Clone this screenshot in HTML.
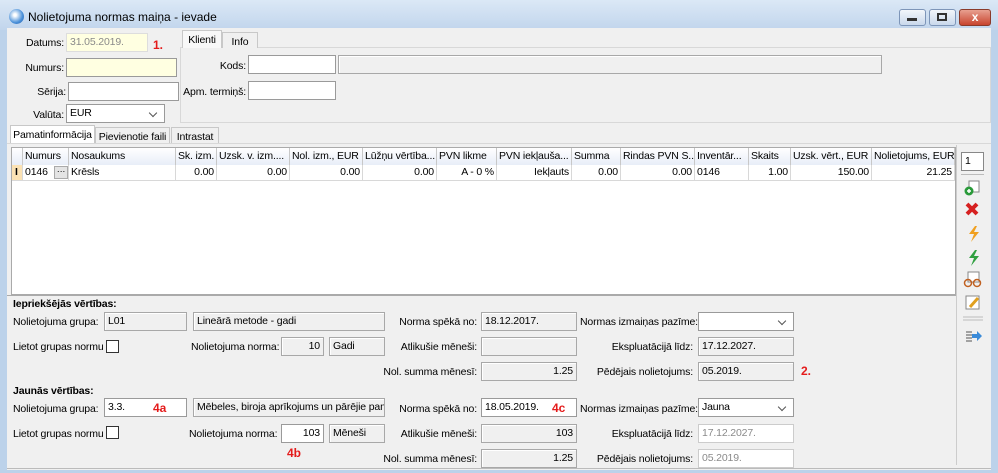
<!DOCTYPE html>
<html><head><meta charset="utf-8"><style>
*{box-sizing:border-box;margin:0;padding:0}
body{width:998px;height:473px;overflow:hidden;font-family:"Liberation Sans",sans-serif;font-size:10.5px;letter-spacing:-0.15px;color:#000;background:#bcd2ea;position:relative}
.a{position:absolute;white-space:nowrap}
.in{position:absolute;background:#fff;border:1px solid #9a9a9a;height:19px;padding:2px 3px;line-height:13px;overflow:hidden;white-space:nowrap}
.ro{background:#f0f0f0;border:1px solid #a8a8a8;box-shadow:inset 1px 1px 0 #fff}
.y{background:#ffffe1}
.r{text-align:right}
.lb{position:absolute;text-align:right;white-space:nowrap;line-height:13px}
.red{position:absolute;color:#e41b1b;font-weight:bold;font-size:12px;letter-spacing:0}
.grey{color:#8a8a8a}
.hd{position:absolute;top:148px;height:17px;border-right:1px solid #c8c8c8;padding:2px 2px;line-height:13px;overflow:hidden;white-space:nowrap;background:linear-gradient(#fff,#e8eef8)}
.cl{position:absolute;top:165px;height:16px;border-right:1px solid #d8d8d8;border-bottom:1px solid #d8d8d8;padding:1px 2px;line-height:13px;overflow:hidden;white-space:nowrap;background:#fff}
.tab{position:absolute;border:1px solid #c8c8c8;border-bottom:none;background:#f0f0f0;padding:3px 0;text-align:center;line-height:13px;white-space:nowrap}
.dd::after{content:"";position:absolute;right:8px;top:5px;width:5px;height:5px;border-right:1px solid #555;border-bottom:1px solid #555;transform:rotate(45deg)}
</style></head><body>
<div class="a" style="left:0;top:0;width:998px;height:30px;background:linear-gradient(#dbe8f6,#c1d5ec)"></div>
<div class="a" style="left:9px;top:9px;width:15px;height:15px;border-radius:50%;background:radial-gradient(circle at 40% 40%,#fff 10%,#4a90d9 60%,#2a5ea8)"></div>
<div class="a" style="left:28px;top:10px;font-size:12px;letter-spacing:0">Nolietojuma normas maiņa - ievade</div>
<div class="a" style="left:899px;top:9px;width:27px;height:17px;border:1px solid #7d95b8;border-radius:3px;background:linear-gradient(#f2f6fb,#c9d8ec)"></div>
<div class="a" style="left:907px;top:18px;width:10px;height:3px;background:#333"></div>
<div class="a" style="left:929px;top:9px;width:27px;height:17px;border:1px solid #7d95b8;border-radius:3px;background:linear-gradient(#f2f6fb,#c9d8ec)"></div>
<div class="a" style="left:937px;top:13px;width:10px;height:8px;border:2px solid #333"></div>
<div class="a" style="left:959px;top:9px;width:32px;height:17px;border:1px solid #8a3a2a;border-radius:3px;background:linear-gradient(#e8a090,#c8442e);color:#fff;font-weight:bold;text-align:center;line-height:15px;font-size:12px">x</div>

<div class="a" style="left:7px;top:28px;width:984px;height:442px;background:#f0f0f0"></div>

<div class="lb" style="left:10px;top:37px;width:54px">Datums:</div>
<div class="in y grey" style="left:66px;top:33px;width:82px;border-color:#ddd">31.05.2019.</div>
<div class="red" style="left:153px;top:38px">1.</div>
<div class="lb" style="left:10px;top:62px;width:54px">Numurs:</div>
<div class="in y" style="left:66px;top:58px;width:111px"></div>
<div class="lb" style="left:10px;top:86px;width:56px">Sērija:</div>
<div class="in" style="left:68px;top:82px;width:111px"></div>
<div class="lb" style="left:10px;top:109px;width:54px">Valūta:</div>
<div class="in dd" style="left:66px;top:104px;width:99px">EUR</div>

<div class="a" style="left:180px;top:47px;width:811px;height:76px;border:1px solid #d8d8d8;background:#f0f0f0"></div>
<div class="tab" style="left:182px;top:30px;width:40px;height:18px;background:#f8f8f8">Klienti</div>
<div class="tab" style="left:222px;top:32px;width:36px;height:16px">Info</div>
<div class="lb" style="left:190px;top:60px;width:56px">Kods:</div>
<div class="in" style="left:248px;top:55px;width:88px"></div>
<div class="in ro" style="left:338px;top:55px;width:544px"></div>
<div class="lb" style="left:180px;top:86px;width:66px">Apm. termiņš:</div>
<div class="in" style="left:248px;top:81px;width:88px"></div>

<div class="tab" style="left:10px;top:125px;width:85px;height:19px;background:#fff">Pamatinformācija</div>
<div class="tab" style="left:95px;top:127px;width:75px;height:17px">Pievienotie faili</div>
<div class="tab" style="left:171px;top:127px;width:48px;height:17px">Intrastat</div>
<div class="a" style="left:7px;top:143px;width:984px;height:1px;background:#d8d8d8"></div>

<div class="a" style="left:11px;top:147px;width:945px;height:148px;background:#fff;border:1px solid #aaa"></div>
<div class="hd" style="left:12px;width:11px"></div>
<div class="hd" style="left:23px;width:46px">Numurs</div>
<div class="hd" style="left:69px;width:107px">Nosaukums</div>
<div class="hd" style="left:176px;width:41px">Sk. izm.</div>
<div class="hd" style="left:217px;width:73px">Uzsk. v. izm....</div>
<div class="hd" style="left:290px;width:73px">Nol. izm., EUR</div>
<div class="hd" style="left:363px;width:74px">Lūžņu vērtība...</div>
<div class="hd" style="left:437px;width:60px">PVN likme</div>
<div class="hd" style="left:497px;width:75px">PVN iekļauša...</div>
<div class="hd" style="left:572px;width:49px">Summa</div>
<div class="hd" style="left:621px;width:74px">Rindas PVN S...</div>
<div class="hd" style="left:695px;width:54px">Inventār...</div>
<div class="hd" style="left:749px;width:42px">Skaits</div>
<div class="hd" style="left:791px;width:81px">Uzsk. vērt., EUR</div>
<div class="hd" style="left:872px;width:83px">Nolietojums, EUR</div>
<div class="cl" style="left:12px;width:11px;background:#fbe2b4;font-weight:bold;padding:1px 3px">I</div>
<div class="cl" style="left:23px;width:46px">0146</div>
<div class="a" style="left:54px;top:166px;width:14px;height:13px;background:#e4e4e4;border:1px solid #aaa;font-size:9px;line-height:8px;text-align:center">···</div>
<div class="cl" style="left:69px;width:107px">Krēsls</div>
<div class="cl r" style="left:176px;width:41px">0.00</div>
<div class="cl r" style="left:217px;width:73px">0.00</div>
<div class="cl r" style="left:290px;width:73px">0.00</div>
<div class="cl r" style="left:363px;width:74px">0.00</div>
<div class="cl r" style="left:437px;width:60px">A - 0 %</div>
<div class="cl r" style="left:497px;width:75px">Iekļauts</div>
<div class="cl r" style="left:572px;width:49px">0.00</div>
<div class="cl r" style="left:621px;width:74px">0.00</div>
<div class="cl" style="left:695px;width:54px">0146</div>
<div class="cl r" style="left:749px;width:42px">1.00</div>
<div class="cl r" style="left:791px;width:81px">150.00</div>
<div class="cl r" style="left:872px;width:83px">21.25</div>

<div class="a" style="left:956px;top:145px;width:1px;height:320px;background:#ccc"></div>
<div class="in" style="left:961px;top:152px;width:23px;height:19px;border-color:#888">1</div>
<div class="a" style="left:961px;top:174px;width:23px;height:1px;background:#bbb"></div>
<svg class="a" style="left:963px;top:180px" width="20" height="180" viewBox="0 0 20 180">
<rect x="6" y="1" width="10" height="11" fill="#fff" stroke="#888"/><circle cx="6" cy="11" r="4.5" fill="#2a9a3a"/><path d="M4 11h4M6 9v4" stroke="#fff" stroke-width="1.5"/>
<path d="M4 24l10 10M14 24l-10 10" stroke="#d62020" stroke-width="4"/>
<path d="M12 46l-6 8h5l-3 8 8-10h-5l3-6z" fill="#f0a020"/>
<path d="M12 70l-6 8h5l-3 8 8-10h-5l3-6z" fill="#30a040"/>
<rect x="5" y="92" width="11" height="10" fill="#fff" stroke="#888"/><circle cx="5" cy="103" r="3.5" fill="none" stroke="#c06020" stroke-width="1.5"/><circle cx="14" cy="103" r="3.5" fill="none" stroke="#c06020" stroke-width="1.5"/>
<rect x="3" y="116" width="13" height="13" fill="#fff" stroke="#888"/><path d="M7 127l8-9" stroke="#e0a020" stroke-width="3"/>
<path d="M0 137h20M0 140h20" stroke="#bbb"/>
<path d="M3 152h6M3 155h6M3 158h6M3 161h6" stroke="#555"/><path d="M9 154h5v-3l5 5-5 5v-3h-5z" fill="#3a8ad8"/>
</svg>

<div class="a" style="left:7px;top:295px;width:949px;height:1px;background:#aaa"></div>
<div class="a" style="left:13px;top:298px;font-weight:bold">Iepriekšējās vērtības:</div>
<div class="lb" style="left:13px;top:316px">Nolietojuma grupa:</div>
<div class="in ro" style="left:104px;top:312px;width:83px">L01</div>
<div class="in ro" style="left:193px;top:312px;width:192px">Lineārā metode - gadi</div>
<div class="lb" style="left:13px;top:341px">Lietot grupas normu</div>
<div class="a" style="left:106px;top:340px;width:13px;height:13px;border:1px solid #333;background:#fff"></div>
<div class="lb" style="left:191px;top:341px">Nolietojuma norma:</div>
<div class="in ro r" style="left:281px;top:337px;width:43px">10</div>
<div class="in ro" style="left:329px;top:337px;width:56px">Gadi</div>
<div class="lb" style="left:380px;top:316px;width:97px">Norma spēkā no:</div>
<div class="in ro" style="left:481px;top:312px;width:96px">18.12.2017.</div>
<div class="lb" style="left:380px;top:341px;width:97px">Atlikušie mēneši:</div>
<div class="in ro" style="left:481px;top:337px;width:96px"></div>
<div class="lb" style="left:370px;top:366px;width:107px">Nol. summa mēnesī:</div>
<div class="in ro r" style="left:481px;top:362px;width:96px">1.25</div>
<div class="lb" style="left:580px;top:316px;width:113px">Normas izmaiņas pazīme:</div>
<div class="in dd" style="left:698px;top:312px;width:96px"></div>
<div class="lb" style="left:580px;top:341px;width:113px">Ekspluatācijā līdz:</div>
<div class="in ro" style="left:698px;top:337px;width:96px">17.12.2027.</div>
<div class="lb" style="left:580px;top:366px;width:113px">Pēdējais nolietojums:</div>
<div class="in ro" style="left:698px;top:362px;width:96px">05.2019.</div>
<div class="red" style="left:801px;top:364px">2.</div>

<div class="a" style="left:13px;top:385px;font-weight:bold">Jaunās vērtības:</div>
<div class="lb" style="left:13px;top:403px">Nolietojuma grupa:</div>
<div class="in" style="left:104px;top:398px;width:83px">3.3.</div>
<div class="red" style="left:153px;top:401px">4a</div>
<div class="in ro" style="left:193px;top:398px;width:192px">Mēbeles, biroja aprīkojums un pārējie pamatlīdzekļi</div>
<div class="lb" style="left:13px;top:428px">Lietot grupas normu</div>
<div class="a" style="left:106px;top:426px;width:13px;height:13px;border:1px solid #333;background:#fff"></div>
<div class="lb" style="left:189px;top:428px">Nolietojuma norma:</div>
<div class="in r" style="left:281px;top:424px;width:43px">103</div>
<div class="in ro" style="left:329px;top:424px;width:56px">Mēneši</div>
<div class="red" style="left:287px;top:446px">4b</div>
<div class="lb" style="left:380px;top:403px;width:97px">Norma spēkā no:</div>
<div class="in" style="left:481px;top:398px;width:96px">18.05.2019.</div>
<div class="red" style="left:552px;top:401px">4c</div>
<div class="lb" style="left:380px;top:428px;width:97px">Atlikušie mēneši:</div>
<div class="in ro r" style="left:481px;top:424px;width:96px">103</div>
<div class="lb" style="left:370px;top:453px;width:107px">Nol. summa mēnesī:</div>
<div class="in ro r" style="left:481px;top:449px;width:96px">1.25</div>
<div class="lb" style="left:580px;top:403px;width:113px">Normas izmaiņas pazīme:</div>
<div class="in dd" style="left:698px;top:398px;width:96px">Jauna</div>
<div class="lb" style="left:580px;top:428px;width:113px">Ekspluatācijā līdz:</div>
<div class="in grey" style="left:698px;top:424px;width:96px;border-color:#ccc">17.12.2027.</div>
<div class="lb" style="left:580px;top:453px;width:113px">Pēdējais nolietojums:</div>
<div class="in grey" style="left:698px;top:449px;width:96px;border-color:#ccc">05.2019.</div>
<div class="a" style="left:7px;top:468px;width:984px;height:1px;background:#bbb"></div>
</body></html>
